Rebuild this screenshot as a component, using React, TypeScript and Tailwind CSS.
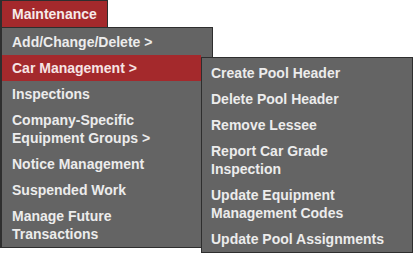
const mainItems: { label: string[]; active?: boolean }[] = [
  { label: ['Add/Change/Delete >'] },
  { label: ['Car Management >'], active: true },
  { label: ['Inspections'] },
  { label: ['Company-Specific', 'Equipment Groups >'] },
  { label: ['Notice Management'] },
  { label: ['Suspended Work'] },
  { label: ['Manage Future', 'Transactions'] },
];

const subItems: string[][] = [
  ['Create Pool Header'],
  ['Delete Pool Header'],
  ['Remove Lessee'],
  ['Report Car Grade', 'Inspection'],
  ['Update Equipment', 'Management Codes'],
  ['Update Pool Assignments'],
];

function Lines({ lines }: { lines: string[] }) {
  return (
    <>
      {lines.map((l, i) => (
        <div key={i} className="whitespace-nowrap">
          {l}
        </div>
      ))}
    </>
  );
}

export default function App() {
  return (
    <div
      className="relative h-[253px] w-[413px] overflow-hidden bg-white text-[14px] font-bold leading-[18px] text-[#ececec]"
      style={{ fontFamily: '"Liberation Sans", Arial, sans-serif' }}
    >
      {/* Top tab */}
      <div className="h-[27px] w-[108px] border-t border-r border-l-2 border-[#2e2e2e] bg-[#a4292c] pl-[10px] pt-[4px] text-[#f6eaea]">
        Maintenance
      </div>

      {/* Main menu */}
      <div className="w-[213px] border border-l-2 border-[#2e2e2e] bg-[#646464] pt-px">
        {mainItems.map((item, i) => (
          <div
            key={i}
            className={
              item.active
                ? 'mr-[11px] bg-[#a4292c] py-[4px] pl-[10px] text-[#f6e4e4]'
                : 'py-[4px] pl-[10px]'
            }
          >
            <Lines lines={item.label} />
          </div>
        ))}
      </div>

      {/* Car Management flyout */}
      <div className="absolute left-[201px] top-[57px] w-[212px] border border-[#2e2e2e] bg-[#646464] pt-[2px]">
        {subItems.map((lines, i) => (
          <div key={i} className="py-[4px] pl-[9px]">
            <Lines lines={lines} />
          </div>
        ))}
      </div>
    </div>
  );
}
